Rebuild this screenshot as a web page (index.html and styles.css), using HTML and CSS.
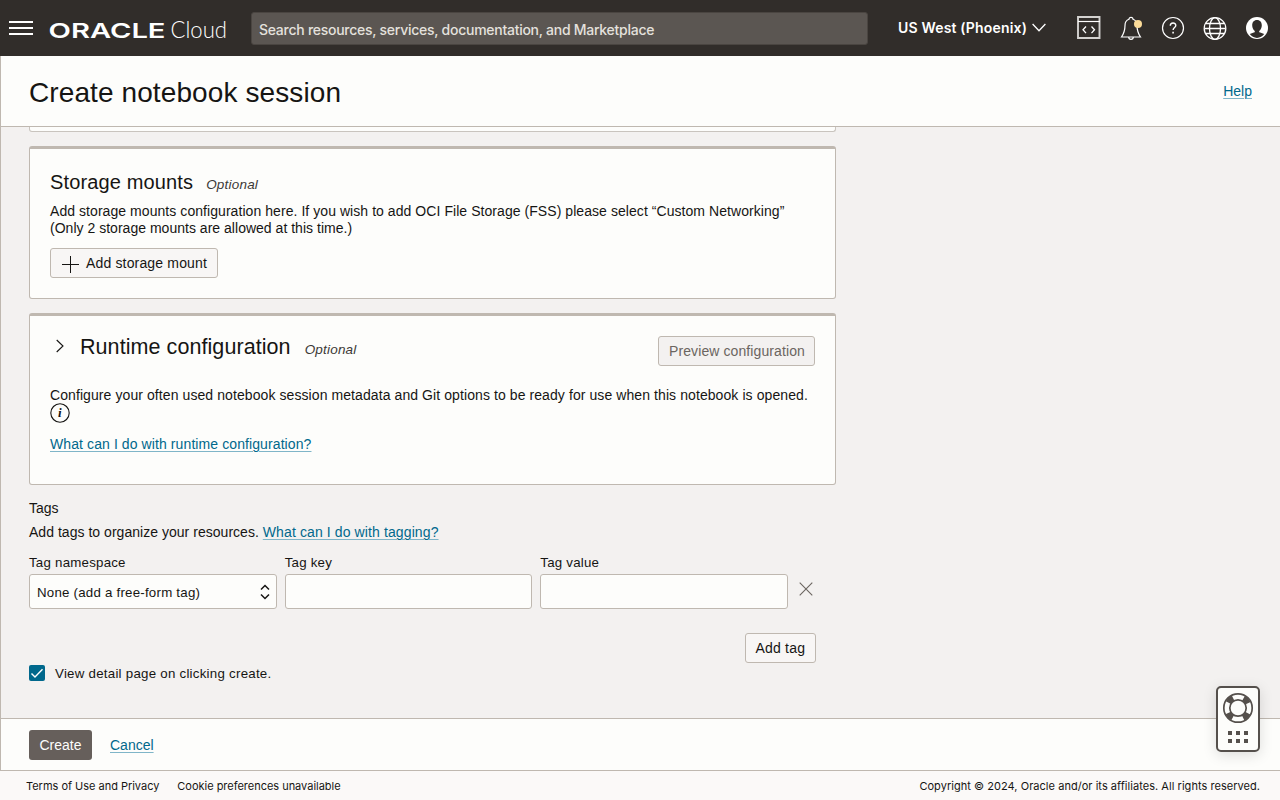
FILE: index.html
```html
<!DOCTYPE html>
<html lang="en">
<head>
<meta charset="utf-8">
<title>Create notebook session</title>
<link rel="stylesheet" href="styles.css">
</head>
<body>
<header class="topbar">
  <svg class="menu" width="24" height="16" viewBox="0 0 24 16"><path d="M0 2h24M0 8h24M0 14h24" stroke="#fff" stroke-width="2"/></svg>
  <svg class="logo" width="184" height="28" viewBox="0 0 184 28" fill="#fff">
    <text class="logo-oracle" x="-1.500" y="21" textLength="117" lengthAdjust="spacingAndGlyphs">ORACLE</text>
    <text class="logo-cloud" x="120.500" y="21" textLength="56.500" lengthAdjust="spacingAndGlyphs">Cloud</text>
  </svg>
  <div class="search">Search resources, services, documentation, and Marketplace</div>
  <div class="region"><span>US West (Phoenix)</span><svg width="14" height="9" viewBox="0 0 14 9" fill="none" stroke="#fff" stroke-width="1.300"><path d="M.6 1l6.400 6.800L13.400 1"/></svg></div>
  <nav class="tools">
    <svg width="24" height="24" viewBox="0 0 24 24" fill="none" stroke="#d4d2d0"><path d="M1 1h21.500v21H1z" stroke-width="1.900"/><path d="M1 5.500h22" stroke="#fff" stroke-width="1.200"/><path d="M9 10.500l-3 3.300 3 3.300M14.500 10.500l3 3.300-3 3.300" stroke="#fff" stroke-width="1.300"/></svg>
    <svg width="24" height="24" viewBox="0 0 24 24" fill="none" stroke="#fff" stroke-width="1.200"><path d="M10 3.300a2 2 0 0 1 4 0c3 1 4 3.400 4 6.200 0 5 .8 7.500 3.500 11.500h-19C5.200 17 6 14.500 6 9.500c0-2.800 1-5.200 4-6.200z"/><path d="M9.700 21a2.300 2.300 0 0 0 4.600 0"/><circle cx="19" cy="8" r="4" fill="#fbdb98" stroke="none"/></svg>
    <svg width="24" height="24" viewBox="0 0 24 24" fill="none" stroke="#fff" stroke-width="1.200"><circle cx="12" cy="12" r="10.500"/><path d="M9.300 9.800c0-3.700 5.500-3.600 5.500-.4 0 2-2.700 2.100-2.700 4.500" stroke-width="1.400"/><path d="M11.300 15.700h1.600v1.700h-1.600z" fill="#fff" stroke="none"/></svg>
    <svg width="24" height="24" viewBox="0 0 24 24" fill="none" stroke="#fff" stroke-width="1.300"><circle cx="12" cy="12.500" r="10.800"/><ellipse cx="12" cy="12.500" rx="5.500" ry="10.800"/><path d="M1.500 12.500h21M3 7.500h18M3 17.500h18"/></svg>
    <svg width="24" height="24" viewBox="0 0 24 24"><circle cx="12" cy="12" r="11" fill="#fff"/><path d="M12 4c-3.200 0-4.800 2.300-4.800 5.300 0 2.600 1 4.500 2.600 5.600.2.900-.2 1.300-1 1.700l-4 1.500c1.400 2.300 4.500 3.900 7.200 3.900s5.800-1.600 7.200-3.900l-4-1.500c-.8-.4-1.200-.8-1-1.700 1.600-1.100 2.600-3 2.600-5.600C16.800 6.300 15.200 4 12 4z" fill="#312d2a"/></svg>
  </nav>
</header>

<div class="panel">
  <div class="titlebar"><h1>Create notebook session</h1><a class="help">Help</a></div>
  <main class="content">
    <section class="card-end"></section>
    <section class="card storage">
      <div class="heading"><h2>Storage mounts</h2><em>Optional</em></div>
      <p>Add storage mounts configuration here. If you wish to add OCI File Storage (FSS) please select “Custom Networking”<br><span class="note">(Only 2 storage mounts are allowed at this time.)</span></p>
      <button class="btn add-mount"><svg width="18" height="18" viewBox="0 0 18 18"><path d="M9.500 1v17M1 9.500h17" stroke="#161513"/></svg><span>Add storage mount</span></button>
    </section>
    <section class="card runtime">
      <div class="runtime-top">
        <div class="heading"><svg class="chev" width="8" height="14" viewBox="0 0 8 14" fill="none" stroke="#161513" stroke-width="1.100"><path d="M.7 1L7 7 .7 13"/></svg><h2>Runtime configuration</h2><em>Optional</em></div>
        <button class="btn disabled">Preview configuration</button>
      </div>
      <p>Configure your often used notebook session metadata and Git options to be ready for use when this notebook is opened.</p>
      <div class="info"><svg width="20" height="20" viewBox="0 0 20 20"><circle cx="10" cy="10" r="9.200" fill="none" stroke="#161513" stroke-width="1.100"/><text x="7.900" y="14.200">i</text></svg></div>
      <a class="runtime-link">What can I do with runtime configuration?</a>
    </section>
    <section class="tags">
      <div class="tags-title">Tags</div>
      <div class="tags-desc">Add tags to organize your resources. <a>What can I do with tagging?</a></div>
      <div class="tag-row">
        <div class="field"><label>Tag namespace</label><div class="input select"><span>None (add a free-form tag)</span><svg width="10" height="16" viewBox="0 0 10 16" fill="none" stroke="#161513" stroke-width="1.500"><path d="M1 5.500L5 1.500l4 4M1 10.500l4 4 4-4"/></svg></div></div>
        <div class="field"><label>Tag key</label><div class="input"></div></div>
        <div class="field"><label>Tag value</label><div class="input"></div></div>
        <svg class="remove" width="14" height="14" viewBox="0 0 14 14"><path d="M.7.700l12.600 12.600M13.300.700L.7 13.300" stroke="#6b6560" stroke-width="1.100"/></svg>
      </div>
      <div class="add-row"><button class="btn">Add tag</button></div>
    </section>
    <label class="check"><svg width="16" height="16" viewBox="0 0 16 16"><rect width="16" height="16" rx="2" fill="#00688c"/><path d="M2.500 8.500l3.500 3.600 7.500-7.800" fill="none" stroke="#fff" stroke-width="1.400"/></svg><span>View detail page on clicking create.</span></label>
  </main>
  <div class="actions"><button class="create">Create</button><a>Cancel</a></div>
</div>

<footer class="footer">
  <span class="terms">Terms of Use and Privacy</span><span class="cookies">Cookie preferences unavailable</span><span class="copy">Copyright © 2024, Oracle and/or its affiliates. All rights reserved.</span>
</footer>

<aside class="support">
  <svg width="32" height="32" viewBox="0 0 32 32" fill="none" stroke="#55504c"><circle cx="16" cy="16" r="11" stroke-width="6" stroke-dasharray="6.500 10.780" stroke-dashoffset="-5.390"/><circle cx="16" cy="16" r="14.200" stroke-width="1.700"/><circle cx="16" cy="16" r="8.200" stroke-width="1.700"/></svg>
  <svg width="20" height="12" viewBox="0 0 20 12" fill="#55504c"><path d="M0 0h4v4H0zM8 0h4v4H8zM16 0h4v4h-4zM0 8h4v4H0zM8 8h4v4H8zM16 8h4v4h-4z"/></svg>
</aside>
</body>
</html>
```
FILE: styles.css
```css
* { box-sizing: border-box; }
body {
  margin: 0;
  width: 1280px;
  height: 800px;
  overflow: hidden;
  display: flex;
  flex-direction: column;
  position: relative;
  font: 14px/17px "Liberation Sans", Arial, sans-serif;
  color: #161513;
  background: #fbf9f8;
}
svg { display: block; flex: none; }
h1, h2, p { margin: 0; font-weight: 400; }
a {
  color: #00688c;
  text-decoration: underline;
  text-decoration-color: #7fb5c8;
  text-decoration-thickness: 1px;
  text-underline-offset: 2px;
}
.topbar { height: 56px; flex: none; display: flex; align-items: center; background: #312d2a; color: #fff; padding: 0 11px 0 9px; font-family: Inter, sans-serif; }
.logo { margin-left: 17px; margin-top: 6px; overflow: visible; }
.logo-oracle { font: 600 20.5px Inter, sans-serif; }
.logo-cloud { font: 300 23px Lato, sans-serif; }
.search { width: 617px; height: 33px; margin-left: 17px; padding-left: 7px; border: 1px solid #4a4541; border-radius: 3px; background: #5b5652; color: #e4e1dd; font-size: 14px; font-weight: 500; line-height: 33px; letter-spacing: -.265px; white-space: nowrap; }
.region { display: flex; align-items: center; gap: 5px; margin-left: 30px; margin-top: -1px; font-weight: 600; font-size: 14px; letter-spacing: .17px; width: 149px; white-space: nowrap; }
.tools { display: flex; gap: 18px; margin-left: auto; }
.panel { height: 715px; flex: none; border-left: 1px solid #bfb8b0; border-bottom: 1px solid #bfb8b0; display: flex; flex-direction: column; background: #fdfdfb; }
.titlebar { height: 71px; flex: none; display: flex; justify-content: space-between; align-items: center; padding: 2px 28px 0; border-bottom: 1px solid #bfb8b0; }
h1 { font-size: 28px; line-height: 34px; letter-spacing: .1px; padding-top: 2px; }
.help { padding-bottom: 2px; }
.content { flex: 1; background: #f3f1f0; padding-left: 28px; overflow: hidden; }
.card-end { width: 807px; height: 5px; background: #fdfdfb; border: 1px solid #c9c4be; border-top: 0; border-radius: 0 0 3px 3px; }
.card { width: 807px; background: #fdfdfb; border: 1px solid #bfb8b0; border-top: 3px solid #bfb8b0; border-radius: 3px; margin-top: 14px; padding: 0 20px; }
.storage { height: 153px; padding-top: 21px; }
.heading { display: flex; align-items: baseline; }
h2 { font-size: 20px; line-height: 24px; letter-spacing: .14px; }
.heading em { font-size: 13.5px; color: #3c3936; margin-left: 13px; letter-spacing: .2px; }
.storage p { margin-top: 9px; white-space: nowrap; letter-spacing: .06px; }
.note { letter-spacing: .02px; }
.btn { font: 14px/28px "Liberation Sans", Arial, sans-serif; height: 30px; padding: 0 10px; border: 1px solid #bfb8b0; border-radius: 3px; background: #f8f6f5; color: #161513; white-space: nowrap; letter-spacing: .1px; }
.add-mount { display: flex; align-items: center; gap: 7px; width: 168px; margin-top: 11px; letter-spacing: .16px; }
.add-mount svg { margin-top: 1px; }
.runtime { height: 172px; margin-top: 14px; padding-top: 19px; }
.runtime-top { display: flex; justify-content: space-between; }
.runtime h2 { font-size: 21.5px; letter-spacing: .07px; }
.runtime em { margin-left: 14px; }
.chev { margin: -2px 16px 0 6px; align-self: center; }
.runtime .heading { height: 24px; }
.btn.disabled { width: 157px; margin-top: 1px; background: #f3f1f0; color: #6b6560; }
.runtime p { margin-top: 21px; white-space: nowrap; letter-spacing: .085px; }
.info { margin-top: -1px; }
.info text { font: italic bold 13px "Liberation Serif", serif; fill: #161513; }
.runtime-link { display: inline-block; margin-top: 13px; letter-spacing: .095px; }
.tags { width: 787px; margin-top: 15px; }
.tags-desc { margin-top: 7px; letter-spacing: .03px; }
.tags-desc a { letter-spacing: .11px; }
.tag-row { display: flex; gap: 8px; margin-top: 14px; font-size: 13.300px; letter-spacing: .22px; }
.field { width: 247.670px; }
.field label { display: block; line-height: 16px; }
.input { height: 35px; margin-top: 3px; border: 1px solid #bfb8b0; border-radius: 3px; background: #fdfdfb; }
.select { display: flex; align-items: center; justify-content: space-between; padding: 1px 6px 0 7px; }
.remove { margin: 27px 0 0 3px; }
.add-row { display: flex; justify-content: flex-end; margin-top: 24px; }
.add-row .btn { width: 71.500px; letter-spacing: .2px; }
.check { display: flex; align-items: center; gap: 10px; margin-top: 1px; font-size: 13.300px; letter-spacing: .25px; }
.check span { padding-top: 1px; }
.actions { height: 52px; flex: none; display: flex; align-items: center; gap: 18px; border-top: 1px solid #bfb8b0; padding-left: 28px; }
.actions a { padding-top: 1px; }
.create { width: 63px; height: 30px; padding: 0; border: 0; border-radius: 3px; background: #665f5b; color: #fdfdfb; font: 14px "Liberation Sans", Arial, sans-serif; }
.footer { flex: 1; display: flex; align-items: center; padding: 0 20px 0 26px; font: 11px/16px Inter, sans-serif; }
.terms, .cookies { letter-spacing: -.02px; }
.cookies { margin-left: 18px; }
.copy { margin-left: auto; letter-spacing: .04px; }
.support { position: absolute; left: 1216px; top: 686px; width: 44px; height: 66px; border: 2px solid #55504c; border-radius: 5px; background: #fdfdfb; box-shadow: 0 3px 14px rgba(0, 0, 0, .13); display: flex; flex-direction: column; align-items: center; gap: 7px; padding-top: 4px; }
```
